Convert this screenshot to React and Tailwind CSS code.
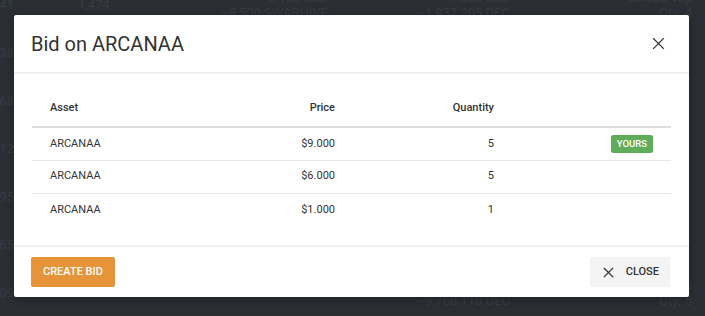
import React from 'react';

const bids = [
  { asset: 'ARCANAA', price: '$9.000', qty: 5, mine: true },
  { asset: 'ARCANAA', price: '$6.000', qty: 5, mine: false },
  { asset: 'ARCANAA', price: '$1.000', qty: 1, mine: false },
];

// market rows that sit behind the backdrop (most of each row is hidden by the modal)
const marketRows = [
  { id: '3.41', n: '1,474', usd: '2.150 USD', sub: '~8,500 SWARHIVE', floor: '1.000 USD', dec: '~1,937.205 DEC', top: '55.000 Top', qty: 'Qty: 4' },
  { id: '2.38' },
  { id: '1.68' },
  { id: '1.12' },
  { id: '0.95' },
  { id: '0.65' },
  { id: '0.09', floor: '5.000 USD', dec: '~9,768.110 DEC', top: '12.000 Top', qty: 'Qty: 5' },
];

function XIcon({ className, width = 2.4 }) {
  return (
    <svg viewBox="0 0 24 24" className={className} fill="none" stroke="currentColor" strokeWidth={width} strokeLinecap="square">
      <path d="M3 3l18 18M21 3L3 21" />
    </svg>
  );
}

function Pair({ a, b }) {
  return (
    <div className="flex flex-col items-end leading-[15px]">
      {a && <span>{a}</span>}
      {b && <span>{b}</span>}
    </div>
  );
}

export default function App() {
  return (
    <div className="relative h-[316px] w-[705px] overflow-hidden bg-[#2b2f35] font-['Roboto',sans-serif]">
      {/* page behind the modal */}
      <div className="-mt-[19px] flex flex-col whitespace-nowrap text-[13px] text-[#383c42]">
        {marketRows.map((r) => (
          <div key={r.id} className="grid h-[48px] grid-cols-[14px_186px_128px_182px_182px] items-center">
            <div className="flex justify-end">{r.id}</div>
            <div className="pl-[64px]">{r.n}</div>
            <Pair a={r.usd} b={r.sub} />
            <Pair a={r.floor} b={r.dec} />
            <Pair a={r.top} b={r.qty} />
          </div>
        ))}
      </div>

      {/* modal */}
      <div className="absolute left-[14px] top-[15px] w-[675px] rounded-[2px] bg-white shadow-[0_2px_8px_rgba(0,0,0,0.35)]">
        <div className="flex h-[59px] items-center justify-between border-b-2 border-[#f0f0f0] pl-[17px] pr-[24px]">
          <h2 className="text-[20px] leading-none text-[#333]">Bid on ARCANAA</h2>
          <XIcon className="h-[13px] w-[13px] text-[#333]" />
        </div>

        <div className="px-[18px] pt-[17px] pb-[19px]">
          <table className="w-full table-fixed border-collapse text-[11px] text-[#333]">
            <colgroup>
              <col className="w-[177px]" />
              <col className="w-[144px]" />
              <col className="w-[159px]" />
              <col />
            </colgroup>
            <thead>
              <tr className="h-[36px] border-b-2 border-[#ddd]">
                <th className="px-[18px] text-left font-medium">Asset</th>
                <th className="px-[18px] text-right font-medium">Price</th>
                <th className="px-[18px] text-right font-medium">Quantity</th>
                <th />
              </tr>
            </thead>
            <tbody>
              {bids.map((b, i) => (
                <tr key={i} className="h-[33px] border-b border-[#e6e6e6] last:border-b-0">
                  <td className="px-[18px]">{b.asset}</td>
                  <td className="px-[18px] text-right">{b.price}</td>
                  <td className="px-[18px] text-right">{b.qty}</td>
                  <td className="px-[18px] text-right">
                    {b.mine && (
                      <span className="inline-block rounded-[2px] bg-[#5fad5a] px-[6px] py-[3px] text-[9.5px] font-medium leading-[12px] text-white">
                        YOURS
                      </span>
                    )}
                  </td>
                </tr>
              ))}
            </tbody>
          </table>
        </div>

        <div className="flex items-center justify-between border-t-2 border-[#f0f0f0] px-[17px] pt-[10px] pb-[10px]">
          <button className="h-[30px] rounded-[2px] bg-[#e5943a] px-[12px] text-[11px] font-medium text-white">
            CREATE BID
          </button>
          <button className="mr-[2px] flex h-[30px] items-center gap-[12px] rounded-[2px] bg-[#f4f4f4] pl-[13px] pr-[11px] text-[11px] font-medium text-[#333]">
            <XIcon className="h-[11px] w-[11px]" width={3} />
            CLOSE
          </button>
        </div>
      </div>
    </div>
  );
}
